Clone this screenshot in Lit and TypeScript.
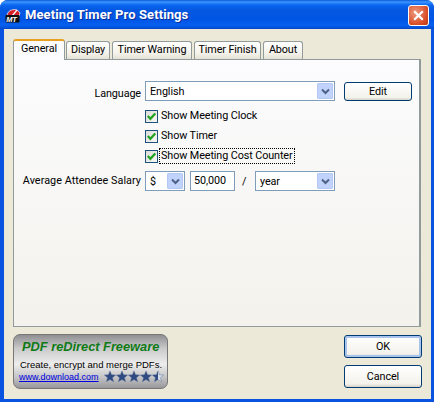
import { LitElement, html, css, svg } from "lit";
import { customElement } from "lit/decorators.js";

const chevron = html`<svg class="chev" width="9" height="7" viewBox="0 0 9 7"><path d="M1 1.5 L4.5 5 L8 1.5" fill="none" stroke="#4D6185" stroke-width="2"/></svg>`;
const tick = html`<svg width="9" height="9" viewBox="0 0 9 9"><path d="M0.8 4 L3.4 6.8 L8.2 1.4" fill="none" stroke="#21A121" stroke-width="2.2"/></svg>`;
const starPts = "6.5,0.5 8.2,4.6 12.6,4.9 9.2,7.8 10.3,12.1 6.5,9.8 2.7,12.1 3.8,7.8 0.4,4.9 4.8,4.6";

@customElement("app-root")
export class AppRoot extends LitElement {
  static styles = css`
    :host { display: block; width: 434px; height: 402px; background: #fff; font: 10.8px Roboto, "Liberation Sans", sans-serif; letter-spacing: -0.1px; color: #000; overflow: hidden; }
    .window { box-sizing: border-box; width: 434px; height: 402px; display: flex; flex-direction: column; background: #0A53E0; border-radius: 8px 8px 0 0; padding: 0 3px 3px 4px; }
    .title { height: 29px; margin: 0 -3px 0 -4px; padding: 0 5px 0 5px; display: flex; align-items: center; gap: 4px; flex: none; border-radius: 8px 8px 0 0;
      background: linear-gradient(180deg, #0A5BD8 0, #3D95FF 2px, #0A66F0 5px, #0458E0 10px, #0055E5 20px, #0660F0 25px, #0350D8 28px, #0244C0 29px); }
    .title-text { font: bold 13px Roboto, sans-serif; color: #fff; text-shadow: 1px 1px 0 #0A2E9A; letter-spacing: 0.1px; flex: 1; white-space: nowrap; }
    .close { width: 21px; height: 21px; box-sizing: border-box; border: 1px solid #fff; border-radius: 3px; background: radial-gradient(circle at 35% 35%, #F09A80, #D8502A 65%, #B83A14); display: flex; align-items: center; justify-content: center; margin-top: 1px; }
    .body { flex: 1; background: #ECE9D8; padding: 10px 10px 10px 9px; display: flex; flex-direction: column; min-height: 0; }
    .tabs { display: flex; align-items: flex-end; height: 20px; position: relative; z-index: 1; }
    .tab { box-sizing: border-box; height: 18px; border: 1px solid #919B9C; border-bottom: none; border-radius: 3px 3px 0 0; padding: 1px 0 0; text-align: center; background: linear-gradient(180deg, #fff, #F3F1E8 70%, #E4E1D4); margin-right: 2px; white-space: nowrap; }
    .tab.active { height: 21px; margin-bottom: -1px; margin-right: 1px; background: #FCFCFE; border-top: 2px solid #E8A020; padding-top: 1px; }
    .panel { flex: none; height: 268px; box-sizing: border-box; border: 1px solid #919B9C; border-right-width: 2px; background: linear-gradient(180deg, #FCFCFE, #F3F2EC); padding: 21px 8px 0 8px; }
    .form { display: grid; grid-template-columns: 119px 1fr; column-gap: 4px; }
    .label { text-align: right; white-space: nowrap; align-self: center; }
    .row { display: flex; align-items: center; }
    .lang-row { gap: 9px; height: 20px; margin-bottom: 5px; }
    .select { box-sizing: border-box; height: 20px; border: 1px solid #7F9DB9; background: #fff; display: flex; align-items: center; justify-content: space-between; padding: 0 1px 0 4px; }
    .arrow { width: 16px; height: 16px; border-radius: 2px; background: #C1D3FB; display: flex; align-items: center; justify-content: center; box-shadow: inset 0 0 0 1px #B4C8F6; }
    .lang { width: 190px; }
    .btn { box-sizing: border-box; border: 1px solid #003C74; border-radius: 3px; background: linear-gradient(180deg, #fff, #F3F2EB 85%, #D6D0C5); display: flex; align-items: center; justify-content: center; }
    .edit { width: 68px; height: 19px; }
    .check { height: 20px; gap: 1px; }
    .box { width: 13px; height: 13px; box-sizing: border-box; border: 1px solid #1C5180; background: linear-gradient(135deg, #DCDCD7, #F8F8F4); display: flex; align-items: center; justify-content: center; flex: none; }
    .check-label { padding: 0 1px; border: 1px dotted transparent; line-height: 14px; white-space: nowrap; }
    .focus { border-color: #000; }
    .salary { gap: 5px; height: 20px; margin-top: 5px; }
    .salary-label { line-height: 20px; letter-spacing: 0.05px; }
    .cur { width: 40px; }
    .amount { box-sizing: border-box; width: 45px; height: 20px; border: 1px solid #7F9DB9; background: #fff; padding: 0 3px; line-height: 18px; }
    .slash { width: 10px; padding-left: 2px; box-sizing: border-box; }
    .year { width: 80px; }
    .footer { display: flex; justify-content: space-between; align-items: flex-start; padding-top: 7px; }
    .ad { box-sizing: border-box; width: 155px; height: 55px; border: 1px solid #77777A; border-radius: 7px; background: linear-gradient(180deg, #8F8F92 0, #C9C9CA 25%, #EDEDED 55%, #C4C4C6 80%, #98989A 100%); padding: 3px 4px 0 5px; white-space: nowrap; letter-spacing: 0; }
    .ad-title { font: italic bold 12.8px "Liberation Sans", Arial, sans-serif; color: #0F7A16; padding-left: 3px; line-height: 18px; }
    .ad-text { font: 9.5px "Liberation Sans", sans-serif; line-height: 11px; padding-left: 1px; margin-top: 3px; }
    .ad-bottom { display: flex; align-items: center; gap: 5px; height: 13px; }
    .ad-link { font: 9px "Liberation Sans", sans-serif; color: #0000E0; text-decoration: underline; width: 80px; }
    .stars { display: flex; }
    .buttons { display: flex; flex-direction: column; gap: 7px; margin-right: -1px; padding-top: 1px; }
    .dlg { width: 78px; height: 23px; }
    .ok { box-shadow: inset 0 0 0 2px #A8C4EC; }
  `;

  private checkRow(text: string, focus = false) {
    return html`<div></div><div class="row check"><span class="box">${tick}</span><span class="check-label ${focus ? "focus" : ""}">${text}</span></div>`;
  }

  private star(half = false) {
    return html`<svg width="12" height="13" viewBox="0 0 13 13">
      <polygon points=${starPts} fill=${half ? "#D8DCE8" : "#2F4A80"} stroke="#5A7098" stroke-width="0.5"></polygon>
      ${half ? svg`<polygon points="6.5,0.5 4.8,4.6 0.4,4.9 3.8,7.8 2.7,12.1 6.5,9.8" fill="#2F4A80"></polygon>` : ""}
    </svg>`;
  }

  render() {
    return html`
      <div class="window">
        <div class="title">
          <svg width="16" height="16" viewBox="0 0 16 16">
            <path d="M2 9 A7 7 0 0 1 15 6 L14 9 Z" fill="#D8202A" stroke="#fff" stroke-width="0.7"></path>
            <path d="M7 9 L12 3" stroke="#fff" stroke-width="1.2"></path>
            <rect x="0.5" y="8" width="14" height="7.5" rx="1" fill="#111"></rect>
            <text x="1.2" y="14.5" font-family="Liberation Sans" font-weight="bold" font-style="italic" font-size="7.5" fill="#fff">MT</text>
          </svg>
          <span class="title-text">Meeting Timer Pro Settings</span>
          <span class="close"><svg width="11" height="11" viewBox="0 0 11 11"><path d="M1.2 1.2 L9.8 9.8 M9.8 1.2 L1.2 9.8" stroke="#fff" stroke-width="2.2"/></svg></span>
        </div>
        <div class="body">
          <div class="tabs">
            <div class="tab active" style="width:52px">General</div>
            <div class="tab" style="width:44px">Display</div>
            <div class="tab" style="width:80px">Timer Warning</div>
            <div class="tab" style="width:67px">Timer Finish</div>
            <div class="tab" style="width:40px">About</div>
          </div>
          <div class="panel">
            <div class="form">
              <div class="label">Language</div>
              <div class="row lang-row">
                <div class="select lang"><span>English</span><span class="arrow">${chevron}</span></div>
                <div class="btn edit">Edit</div>
              </div>
              ${this.checkRow("Show Meeting Clock")}
              ${this.checkRow("Show Timer")}
              ${this.checkRow("Show Meeting Cost Counter", true)}
              <div class="label salary salary-label">Average Attendee Salary</div>
              <div class="row salary">
                <div class="select cur"><span>$</span><span class="arrow">${chevron}</span></div>
                <div class="amount">50,000</div>
                <div class="slash">/</div>
                <div class="select year"><span>year</span><span class="arrow">${chevron}</span></div>
              </div>
            </div>
          </div>
          <div class="footer">
            <div class="ad">
              <div class="ad-title">PDF reDirect Freeware</div>
              <div class="ad-text">Create, encrypt and merge PDFs.</div>
              <div class="ad-bottom">
                <span class="ad-link">www.download.com</span>
                <span class="stars">${this.star()}${this.star()}${this.star()}${this.star()}${this.star(true)}</span>
              </div>
            </div>
            <div class="buttons">
              <div class="btn dlg ok">OK</div>
              <div class="btn dlg">Cancel</div>
            </div>
          </div>
        </div>
      </div>
    `;
  }
}
